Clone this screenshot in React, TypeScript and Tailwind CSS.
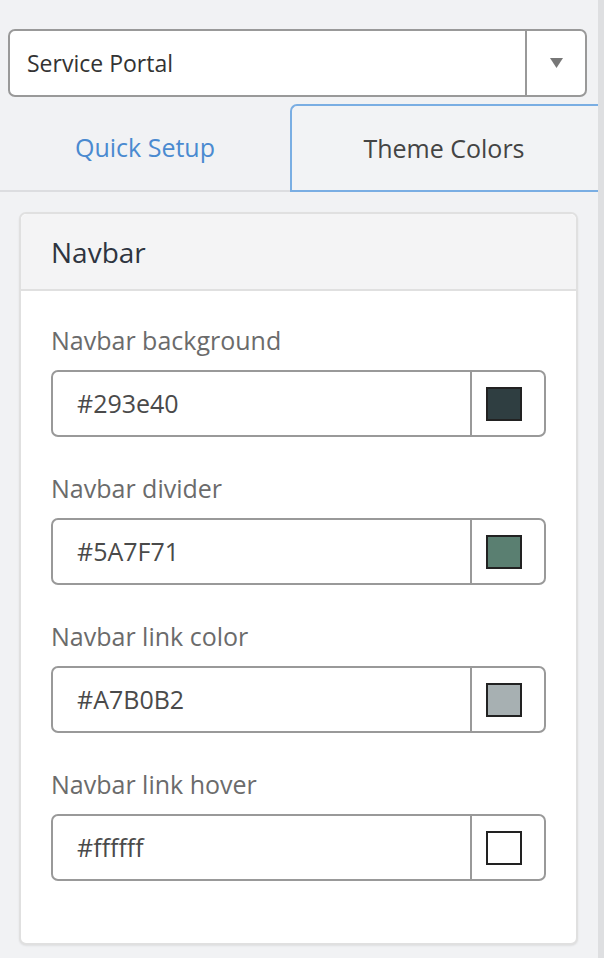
const fields = [
  { label: 'Navbar background', value: '#293e40', color: '#2f3e41' },
  { label: 'Navbar divider', value: '#5A7F71', color: '#5a7f71' },
  { label: 'Navbar link color', value: '#A7B0B2', color: '#a7b0b2' },
  { label: 'Navbar link hover', value: '#ffffff', color: '#ffffff' },
];

function ColorField({ label, value, color }: { label: string; value: string; color: string }) {
  return (
    <div className="mb-[36px]">
      <div className="text-[25px] leading-[30px] text-[#6b6b6b] mb-[15px]">{label}</div>
      <div className="flex h-[67px] border-2 border-[#999] rounded-[7px] bg-white">
        <div className="flex-1 flex items-center pl-[24px] text-[25px] text-[#4a4a4a]">{value}</div>
        <div className="w-[74px] border-l-2 border-[#999] flex items-center pl-[14px]">
          <div className="w-[36px] h-[34px] border-2 border-[#222]" style={{ backgroundColor: color }} />
        </div>
      </div>
    </div>
  );
}

export default function App() {
  return (
    <div
      className="flex w-[604px] h-[958px] bg-[#f1f2f4] overflow-hidden"
      style={{ fontFamily: '"Open Sans", "Noto Sans", sans-serif' }}
    >
      <div className="w-[598px] shrink-0 flex flex-col pt-[29px]">
        <div className="mx-[8px] w-[579px] h-[68px] flex border-2 border-[#999] rounded-[7px] bg-white">
          <div className="flex-1 flex items-center pl-[17px] text-[23px] text-[#333]">Service Portal</div>
          <div className="w-[60px] border-l-2 border-[#999] flex items-center justify-center">
            <svg width="13" height="10" viewBox="0 0 13 10">
              <path d="M0 0 H13 L6.5 10 Z" fill="#777" />
            </svg>
          </div>
        </div>
        <div className="flex mt-[7px] h-[88px]">
          <div className="w-[290px] flex items-center justify-center border-b-2 border-[#dcdde0] text-[25px] text-[#4a8ad0] pt-[2px]">
            Quick Setup
          </div>
          <div className="flex-1 flex items-center justify-center border-2 border-r-0 border-[#7aaee3] rounded-tl-[7px] text-[25px] text-[#444] bg-[#f2f3f5] pt-[2px]">
            <span className="pr-[2px]">Theme Colors</span>
          </div>
        </div>
        <div className="mx-[19px] mt-[20px] w-[559px] rounded-[7px] border-2 border-[#e0e0e0] bg-white shadow-[0_1px_2px_rgba(0,0,0,0.08)]">
          <div className="h-[77px] flex items-center px-[30px] bg-[#f4f4f5] border-b-2 border-[#e0e0e0] rounded-t-[6px] text-[28px] text-[#2e3440]">
            Navbar
          </div>
          <div className="px-[30px] pt-[34px] pb-[26px]">
            {fields.map((f) => (
              <ColorField key={f.label} {...f} />
            ))}
          </div>
        </div>
      </div>
      <div className="flex-1 bg-[#dedfe1]" />
    </div>
  );
}
